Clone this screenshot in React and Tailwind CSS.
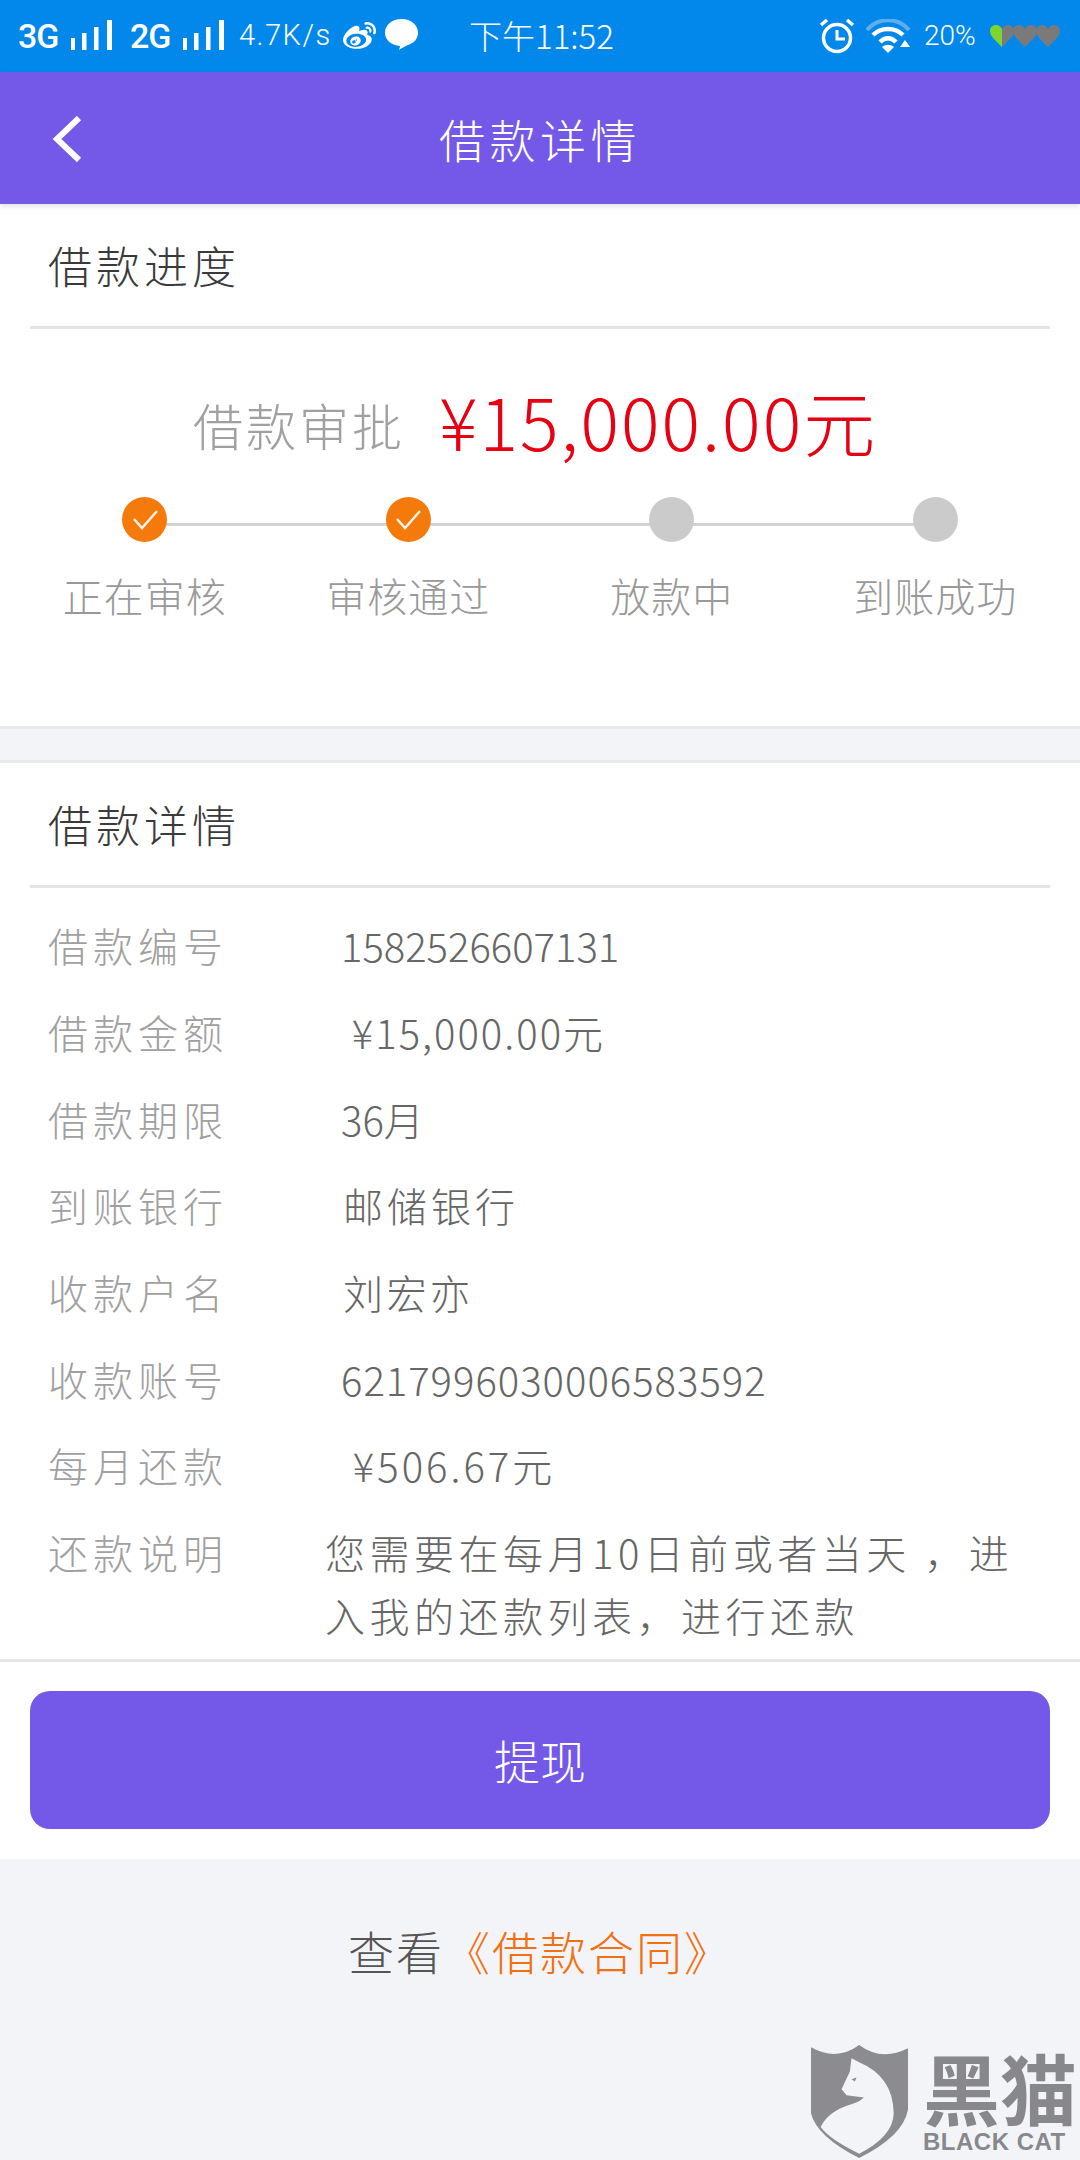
import { FaWeibo } from 'react-icons/fa';

const cjk = "font-['Noto_Sans_CJK_SC','Noto_Sans',sans-serif]";

function Signal() {
  return (
    <svg width="42" height="30" viewBox="0 0 42 30" fill="white">
      <rect x="0" y="18" width="4" height="12" />
      <rect x="11" y="13" width="4.5" height="17" />
      <rect x="23" y="7" width="4.5" height="23" />
      <rect x="36" y="0" width="5" height="30" />
    </svg>
  );
}

function Heart({ fill }) {
  return (
    <svg width="24" height="22" viewBox="0 0 24 22">
      <path d="M12 22 C5 15 0 11 0 6 C0 2 3 0 6 0 C9 0 11 2 12 4 C13 2 15 0 18 0 C21 0 24 2 24 6 C24 11 19 15 12 22 Z" fill={fill} />
    </svg>
  );
}

function StatusBar() {
  return (
    <div className={`h-[72px] bg-[#0288ea] flex items-center text-white pl-[18px] pr-[20px] ${cjk}`}>
      <span className="text-[34px] font-medium tracking-[-1px] font-['Roboto',sans-serif] w-[46px] whitespace-nowrap">3G</span>
      <span className="ml-[7px] -mt-[2px]"><Signal /></span>
      <span className="text-[34px] font-medium tracking-[-1px] font-['Roboto',sans-serif] w-[46px] ml-[17px] whitespace-nowrap">2G</span>
      <span className="ml-[7px] -mt-[2px]"><Signal /></span>
      <span className="ml-[14px] text-[29px] font-light font-['Roboto',sans-serif] tracking-[1.5px] w-[92px] whitespace-nowrap">4.7K/s</span>
      <FaWeibo className="ml-[12px] text-[33px]" />
      <svg className="ml-[9px] -mt-[4px]" width="33" height="31" viewBox="0 0 33 31" fill="white">
        <path d="M16.5 0 C26 0 33 6 33 13.5 C33 20 29 24 23 26 C20 27 17 29 14 31 C14.500 29 15 28 15 27 C6 26 0 21 0 13.500 C0 6 7 0 16.500 0 Z" />
      </svg>
      <span className="ml-[51px] text-[33px] font-light whitespace-nowrap w-[144px]">下午11:52</span>
      <svg className="ml-[206px]" width="36" height="36" viewBox="0 0 36 36" fill="none" stroke="white" strokeWidth="3.500">
        <circle cx="18" cy="20" r="13.500" />
        <path d="M18 12 V21 H26" strokeWidth="3" />
        <path d="M2 7 L8 2 M34 7 L28 2" strokeWidth="3.500" />
      </svg>
      <svg className="ml-[11px]" width="45" height="34" viewBox="0 0 45 34" fill="none" strokeLinecap="butt">
        <path d="M1 11 C12 -2 32 -2 43 11" stroke="#5eaeee" strokeWidth="4" />
        <path d="M7 16 C15 8 29 8 37 16" stroke="white" strokeWidth="4.500" />
        <path d="M14 23 C19 18 25 18 30 23" stroke="white" strokeWidth="4.500" />
        <path d="M22 34 L16 28 C20 25 24 25 28 28 Z" fill="white" />
        <path d="M39 21 L44 28 H34 Z" fill="white" />
      </svg>
      <span className="ml-[13px] text-[28px] font-light font-['Roboto',sans-serif] w-[53px] whitespace-nowrap">20%</span>
      <div className="ml-[13px] flex -space-x-[1px]">
        <svg width="24" height="22" viewBox="0 0 24 22">
          <path d="M12 22 C5 15 0 11 0 6 C0 2 3 0 6 0 C9 0 11 2 12 4 Z" fill="#7ed52f" />
          <path d="M12 22 C19 15 24 11 24 6 C24 2 21 0 18 0 C15 0 13 2 12 4 Z" fill="#7a7a7a" />
        </svg>
        <Heart fill="#7a7a7a" />
        <Heart fill="#7a7a7a" />
      </div>
    </div>
  );
}

function AppBar() {
  return (
    <div className="relative h-[132px] bg-[#7458e8] flex items-center justify-center shadow-[0_3px_5px_rgba(0,0,0,0.1)]">
      <svg className="absolute left-[50px] top-[44px]" width="33" height="46" viewBox="0 0 33 46" fill="none" stroke="white" strokeWidth="6">
        <path d="M29 2 L7 23 L29 44" />
      </svg>
      <span className={`text-[46px] text-white tracking-[4.5px] font-light ${cjk}`}>借款详情</span>
    </div>
  );
}

function SectionTitle({ children }) {
  return (
    <div className="h-[125px] mx-[30px] flex items-center border-b-[3px] border-[#e4e4e8] pl-[18px]">
      <span className={`text-[44px] text-[#3a3a3a] tracking-[4px] font-light ${cjk}`}>{children}</span>
    </div>
  );
}

const steps = [
  { label: '正在审核', done: true },
  { label: '审核通过', done: true },
  { label: '放款中', done: false },
  { label: '到账成功', done: false },
];

function Progress() {
  return (
    <div className="relative mx-[13px] grid grid-cols-4">
      <div className="absolute left-[132px] right-[132px] top-[26px] h-[3px] bg-[#d2d2d2]" />
      {steps.map((s) => (
        <div key={s.label} className="relative flex flex-col items-center">
          <div className={`w-[45px] h-[45px] rounded-full flex items-center justify-center ${s.done ? 'bg-[#f57a0c]' : 'bg-[#cbcbcb]'}`}>
            {s.done && (
              <svg width="28" height="24" viewBox="0 0 28 24" fill="none" stroke="white" strokeWidth="2.500" opacity="0.9">
                <path d="M3 11 L11 20 L26 3" />
              </svg>
            )}
          </div>
          <span className={`mt-[25px] text-[40px] leading-[56px] text-[#999] tracking-[1px] font-light ${cjk}`}>{s.label}</span>
        </div>
      ))}
    </div>
  );
}

const rows = [
  { label: '借款编号', value: '1582526607131', cls: 'tracking-[0px]' },
  { label: '借款金额', value: ' ¥15,000.00元', cls: 'tracking-[2px]' },
  { label: '借款期限', value: '36月', cls: 'tracking-[0px]' },
  { label: '到账银行', value: '邮储银行', cls: 'tracking-[4px] ml-[2px]' },
  { label: '收款户名', value: '刘宏亦', cls: 'tracking-[3.5px] ml-[2px]' },
  { label: '收款账号', value: '6217996030006583592', cls: 'tracking-[1px]' },
  { label: '每月还款', value: ' ¥506.67元', cls: 'tracking-[3px]' },
];

function Row({ label, value, cls }) {
  return (
    <div className="h-[86.7px] flex items-center pl-[48px]">
      <span className={`w-[293px] text-[40px] text-[#a0a0a0] tracking-[5px] font-light ${cjk}`}>{label}</span>
      <span className={`text-[40px] text-[#666] whitespace-pre font-light ${cls} ${cjk}`}>{value}</span>
    </div>
  );
}

function Watermark() {
  return (
    <div className="absolute left-[811px] top-[2045px] flex">
      <svg width="97" height="113" viewBox="33 45 292 340">
        <path d="M33 52 Q110 95 178 45 Q245 95 325 55 L325 240 Q310 320 178 385 Q50 320 33 250 Z" fill="#8c8c90" />
        <path d="M155 85 L178 97 Q280 140 282 250 Q280 320 178 372 Q90 330 62 292 Q85 245 150 225 Q178 217 192 203 L140 196 L125 178 L150 125 Z" fill="#f3f4f8" />
        <path d="M155 148 L170 143 L165 155 Z" fill="#8c8c90" />
      </svg>
      <div className="ml-[15px] w-[157px] flex flex-col text-[#88888c]">
        <span className={`text-[77px] leading-[84px] font-bold whitespace-nowrap ${cjk}`}>黑猫</span>
        <span className="text-[24px] leading-[28px] font-bold whitespace-nowrap font-['Liberation_Sans',sans-serif] tracking-[0.5px] -mt-[1px]">BLACK CAT</span>
      </div>
    </div>
  );
}

export default function App() {
  return (
    <div className={`relative w-[1080px] h-[2160px] overflow-hidden bg-[#f3f4f8] ${cjk}`}>
      <StatusBar />
      <AppBar />

      {/* 借款进度 */}
      <div className="h-[525px] bg-white border-b-[3px] border-[#e9e9ec]">
        <SectionTitle>借款进度</SectionTitle>
        <div className="h-[168px] flex items-center pl-[193px] pt-[13px]">
          <span className={`mt-[9px] text-[50px] text-[#a0a0a0] tracking-[3px] font-light ${cjk}`}>借款审批</span>
          <span className={`ml-[34px] text-[72px] text-[#e60012] tracking-[2px] font-light whitespace-nowrap ${cjk}`}>¥15,000.00元</span>
        </div>
        <Progress />
      </div>

      {/* 借款详情 */}
      <div className="mt-[31px] bg-white border-t-[3px] border-[#e9e9ec]">
        <SectionTitle>借款详情</SectionTitle>
        <div className="pt-[14px]">
          {rows.map((r) => (
            <Row key={r.label} label={r.label} value={r.value} cls={r.cls} />
          ))}
          <div className="flex pl-[48px] pt-[12px] h-[150px]">
            <span className={`w-[277px] text-[40px] leading-[63px] text-[#a0a0a0] tracking-[5px] font-light ${cjk}`}>还款说明</span>
            <p className={`w-[700px] text-[40px] leading-[63px] text-[#666] tracking-[4.5px] font-light ${cjk}`}>
              您需要在每月10日前或者当天 ，进入我的还款列表，进行还款
            </p>
          </div>
        </div>
        <div className="border-t-[3px] border-[#e6e6e8] px-[30px] pt-[29px] pb-[30px]">
          <button className={`w-full h-[138px] rounded-[20px] bg-[#7458e8] text-white text-[46px] font-light ${cjk}`}>提现</button>
        </div>
      </div>

      <div className={`mt-[60px] text-center text-[46px] leading-[62px] tracking-[2px] font-light text-[#555] ${cjk}`}>
        查看<span className="text-[#f07012]">《借款合同》</span>
      </div>

      <Watermark />
    </div>
  );
}
